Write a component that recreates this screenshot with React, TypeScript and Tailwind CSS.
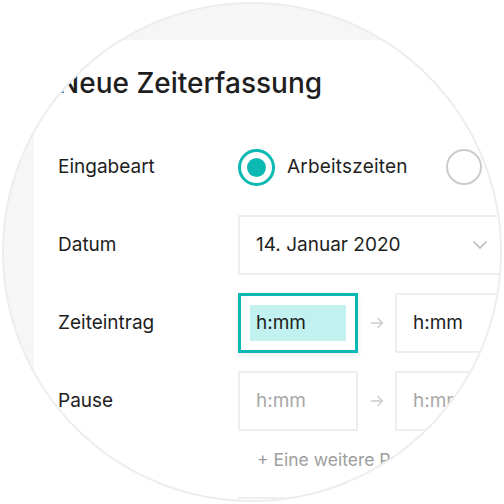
import type { ReactNode } from 'react';

const teal = 'border-[#0cb9b2]';

function Row({ label, children }: { label: string; children: ReactNode }) {
  return (
    <div className="flex h-[60px] items-center">
      <div className="w-[180px] text-[19px] text-[#1e1e1e]">{label}</div>
      <div className="flex items-center">{children}</div>
    </div>
  );
}

function Arrow() {
  return (
    <div className="flex w-[37px] justify-center">
      <svg width="14" height="12" viewBox="0 0 14 12" fill="none" stroke="#cccccc" strokeWidth="1.4" strokeLinecap="round" strokeLinejoin="round">
        <path d="M1.5 6h11M8 1.5 12.5 6 8 10.5" />
      </svg>
    </div>
  );
}

function TimeBox({ placeholder = false }: { placeholder?: boolean }) {
  return (
    <div className="flex h-[60px] w-[120px] items-center border-2 border-[#eeeeee] px-4 text-[19px]">
      <span className={placeholder ? 'text-[#a8a8a8]' : 'text-[#1e1e1e]'}>h:mm</span>
    </div>
  );
}

export default function App() {
  return (
    <div className="h-[504px] w-[504px] overflow-hidden bg-white" style={{ fontFamily: 'Inter, "Noto Sans", sans-serif' }}>
      <div className="ml-[2px] mt-[2px] h-[500px] w-[500px] overflow-hidden rounded-full border-2 border-[#ededed] bg-[#f6f6f6]">
        <div className="ml-[30px] mt-[36px] h-[620px] w-[620px] bg-white pl-6 pt-[25px]">
          <h1 className="text-[28px] font-medium leading-[36px] text-[#1e1e1e]">Neue Zeiterfassung</h1>

          <div className="mt-9 flex flex-col gap-[18px]">
            <Row label="Eingabeart">
              <div className={`flex h-[37px] w-[37px] items-center justify-center rounded-full border-[3px] ${teal}`}>
                <div className="h-[19px] w-[19px] rounded-full bg-[#0cb9b2]" />
              </div>
              <span className="ml-[12px] text-[19px] tracking-[0.2px] text-[#1e1e1e]">Arbeitszeiten</span>
              <div className="ml-[38px] h-[36px] w-[36px] rounded-full border-2 border-[#cccccc]" />
            </Row>

            <Row label="Datum">
              <div className="flex h-[60px] w-[270px] items-center justify-between border-2 border-[#eeeeee] pl-4 pr-[19px] text-[19px] text-[#1e1e1e]">
                <span>14. Januar 2020</span>
                <svg width="14" height="8" viewBox="0 0 14 8" fill="none" stroke="#c8c8c8" strokeWidth="1.8" strokeLinecap="round" strokeLinejoin="round">
                  <path d="M1 1l6 6 6-6" />
                </svg>
              </div>
            </Row>

            <Row label="Zeiteintrag">
              <div className={`flex h-[60px] w-[120px] border-[3px] ${teal} bg-white p-[9px] shadow-[0_2px_8px_rgba(0,0,0,0.08)]`}>
                <div className="flex flex-1 items-center bg-[#c2f2ef] px-[6px] text-[19px] text-[#1e1e1e]">h:mm</div>
              </div>
              <Arrow />
              <TimeBox />
            </Row>

            <Row label="Pause">
              <TimeBox placeholder />
              <Arrow />
              <TimeBox placeholder />
            </Row>
          </div>

          <div className="ml-[180px] mt-[17px] flex h-6 items-center pl-[19px] text-[17.5px] text-[#9e9e9e]">
            + Eine weitere Pause hinzufügen
          </div>

          <div className="ml-[180px] mt-[25px] h-[60px] w-[270px] border-2 border-[#eeeeee]" />
        </div>
      </div>
    </div>
  );
}
